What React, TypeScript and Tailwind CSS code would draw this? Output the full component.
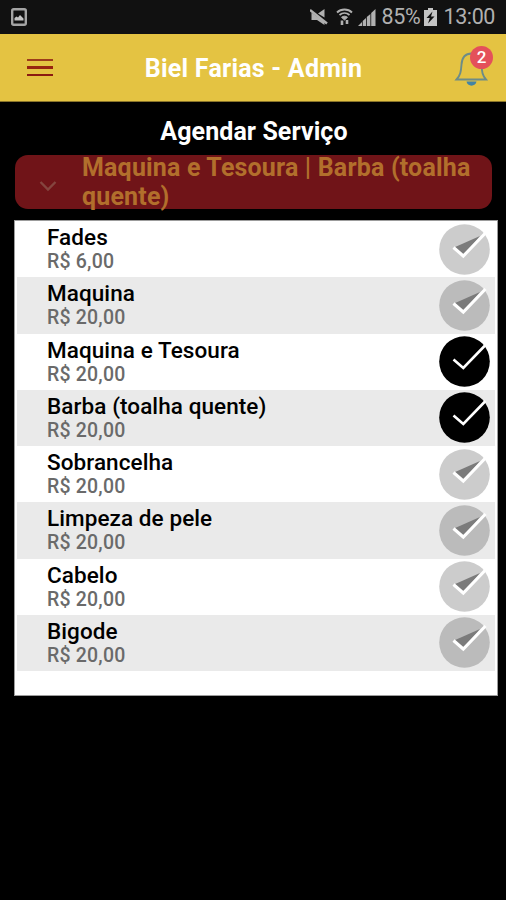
import { useState } from 'react';

interface IService {
  id: number;
  name: string;
  price: string;
}

const services: IService[] = [
  { id: 1, name: 'Fades', price: 'R$ 6,00' },
  { id: 2, name: 'Maquina', price: 'R$ 20,00' },
  { id: 3, name: 'Maquina e Tesoura', price: 'R$ 20,00' },
  { id: 4, name: 'Barba (toalha quente)', price: 'R$ 20,00' },
  { id: 5, name: 'Sobrancelha', price: 'R$ 20,00' },
  { id: 6, name: 'Limpeza de pele', price: 'R$ 20,00' },
  { id: 7, name: 'Cabelo', price: 'R$ 20,00' },
  { id: 8, name: 'Bigode', price: 'R$ 20,00' },
];

function StatusBar() {
  return (
    <div className="h-[34px] bg-[#111111] flex items-center justify-between pl-[11px] pr-[11px] text-[#b0b0b0]">
      <svg width="16" height="18" viewBox="0 0 16 18" fill="none">
        <rect x="1.2" y="1.2" width="13.6" height="15.6" rx="1.5" stroke="#a4a4a4" strokeWidth="2.4" />
        <path d="M3.5 12.5V10l2-1.5 1.5 1 2-2.500 3.500 3.500v2z" fill="#c4c4c4" />
      </svg>
      <div className="flex items-center">
        <svg width="18" height="18" viewBox="0 0 18 18" fill="#b0b0b0">
          <path d="M8 5.500L14.500 1v8.500z" />
          <path d="M1.500 4.500l13 9.500v3L7 12H1.500z" />
          <path d="M0 2l17 13.500" stroke="#b0b0b0" strokeWidth="2.400" />
        </svg>
        <svg className="ml-[8px]" width="17" height="18" viewBox="0 0 17 18" fill="none" stroke="#b0b0b0" strokeWidth="1.800">
          <path d="M1 4.500c4-4 11-4 15 0" />
          <path d="M3.500 7c3-2.600 7-2.600 10 0" />
          <path d="M5.500 9.300c2-1.500 4-1.500 6 0L8.500 12z" fill="#b0b0b0" strokeWidth="1" />
          <path d="M6 12.500v4.500M11 12v4" strokeWidth="2.600" />
        </svg>
        <svg className="ml-[5px]" width="18" height="17" viewBox="0 0 18 17" fill="#b0b0b0">
          <path d="M0 17l4-4v4zM4.700 12l3.300-3v8H4.700zM8.800 8l3.600-3v12H8.800zM13.200 4L17.500 0v17h-4.300z" />
        </svg>
        <span className="ml-[5px] text-[21.500px] leading-none tracking-[-0.300px]">85%</span>
        <svg className="ml-[4px]" width="13" height="18" viewBox="0 0 13 18" fill="#c4c4c4">
          <path d="M4 0h5v2h4v16H0V2h4z" />
          <path d="M8.500 3.500L2.500 10h3.300L4 15.500l6.500-7H7z" fill="#111111" />
        </svg>
        <span className="ml-[6px] text-[21.500px] leading-none tracking-[-0.400px]">13:00</span>
      </div>
    </div>
  );
}

function Header() {
  return (
    <header className="h-[68px] bg-[#e4c342] border-b border-[#8a752a] flex items-center justify-between pl-[27px] pr-[13px]">
      <button className="flex flex-col gap-[5px]">
        <span className="h-[2.500px] w-[26px] bg-[#9d3c1b]" />
        <span className="h-[2.500px] w-[26px] bg-[#98240f]" />
        <span className="h-[2.500px] w-[26px] bg-[#8b1a10]" />
      </button>
      <h1 className="mt-px ml-px text-[25px] font-bold text-white leading-none tracking-[0.230px]">Biel Farias - Admin</h1>
      <div className="relative -top-px">
        <svg width="40" height="42" viewBox="0 0 40 42" fill="none">
          <path d="M3.500 33.500h29.500c-4-4.500-4-8-4.500-15C28 11 24 7.500 18.500 7.500S9 11 8.500 18.500c-.5 7-1 10.500-5 15z" stroke="#6d8c88" strokeWidth="1.900" />
          <path d="M13.500 35.500h10c-.5 5.500-9.500 5.500-10 0z" fill="#4484a4" />
        </svg>
        <span className="absolute right-0 top-0 size-[23px] rounded-full bg-[#e4505a] text-white text-[17px] font-medium leading-[22px] text-center">2</span>
      </div>
    </header>
  );
}

function CheckMark({ checked }: { checked: boolean }) {
  return (
    <svg width="51" height="51" viewBox="0 0 51 51" fill="none">
      <circle cx="25.500" cy="25.500" r="25.300" fill="#000000" fillOpacity={checked ? 1 : 0.2} />
      {!checked && <path d="M15 23.500L24.300 32 41 12z" fill="#7b7b7b" />}
      <path d="M14.500 23.500l9.800 8.500L46.500 9" stroke="#ffffff" strokeWidth={checked ? 2.6 : 3.1} />
    </svg>
  );
}

function App() {
  const [selected, setSelected] = useState<number[]>([3, 4]);

  function toggle(id: number) {
    setSelected((prev) => (prev.includes(id) ? prev.filter((s) => s !== id) : [...prev, id]));
  }

  const label = services
    .filter((s) => selected.includes(s.id))
    .map((s) => s.name)
    .join(' | ');

  return (
    <div className="w-full h-screen bg-black overflow-hidden font-[Roboto,sans-serif]">
      <StatusBar />
      <Header />
      <h2 className="mt-[15px] text-center text-[25px] leading-[29px] font-bold text-white pl-[2px] tracking-[0.080px]">Agendar Serviço</h2>
      <div className="mt-[9px] ml-[15px] mr-[14px] h-[54px] rounded-[13px] bg-[#701418] flex items-center">
        <svg className="ml-[24px] mt-[7px] shrink-0" width="18" height="12" viewBox="0 0 18 12" fill="none">
          <path d="M1.500 2l7.500 7.500L16.500 2" stroke="#84453f" strokeWidth="2.400" />
        </svg>
        <p className="ml-[25px] text-[25px] leading-[29px] font-bold text-[#b26f2c] tracking-[0.170px]">{label}</p>
      </div>
      <div className="mt-[11px] ml-[14px] mr-[8px] h-[476px] bg-white border border-[#9c9c9c] px-[2px]">
        {services.map((s) => (
          <div
            key={s.id}
            className="h-[56.250px] even:bg-[#eaeaea] flex items-center justify-between pl-[30px] pr-[5px]"
            onClick={() => toggle(s.id)}
          >
            <div>
              <p className="text-[22.500px] leading-[25px] font-medium text-black tracking-[0.080px]">{s.name}</p>
              <p className="text-[19.500px] leading-[23px] font-medium text-[#6a6a6a] tracking-[0.200px]">{s.price}</p>
            </div>
            <CheckMark checked={selected.includes(s.id)} />
          </div>
        ))}
      </div>
    </div>
  );
}

export default App;
